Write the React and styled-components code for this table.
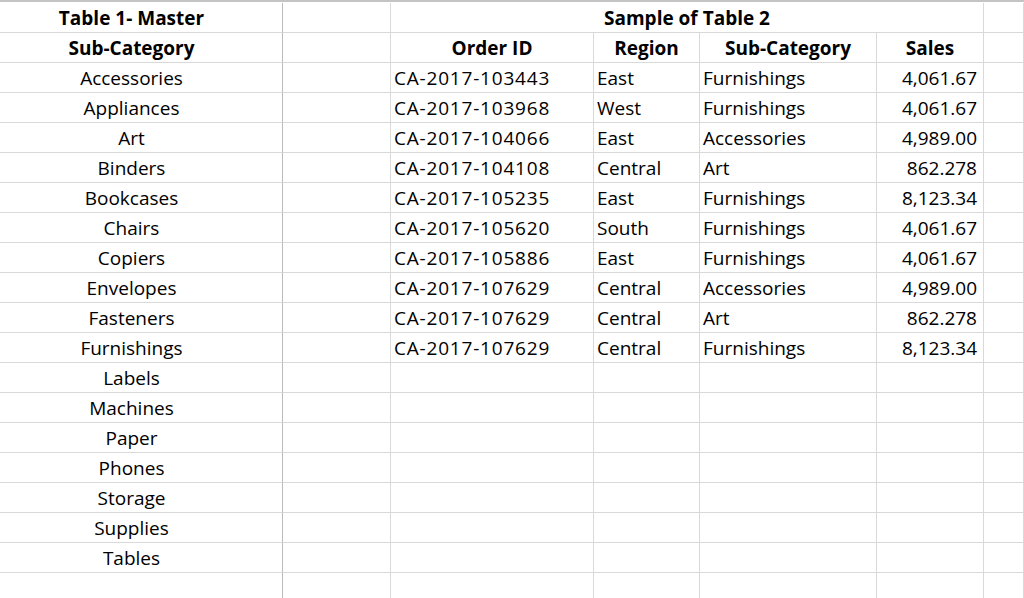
import React from "react";
import styled, { createGlobalStyle } from "styled-components";

const Global = createGlobalStyle`
  html, body { margin: 0; padding: 0; background: #ffffff; }
  body { font-family: "Open Sans", Lato, sans-serif; color: #000; overflow: hidden; }
`;

const Sheet = styled.div`
  width: 1024px;
  height: 598px;
  overflow: hidden;
  border-top: 2px solid #c4c4c4;
  padding-top: 1px;
  box-sizing: border-box;
  display: grid;
  grid-template-columns: 283px 108px 203px 106px 177px 107px 1fr;
  grid-auto-rows: 30px;
  font-size: 19px;
`;

const Cell = styled.div`
  box-sizing: border-box;
  border-right: 1px solid ${(p) => (p.$strong ? "#bcbcbc" : "#d9d9d9")};
  border-bottom: 1px solid #d9d9d9;
  display: flex;
  align-items: center;
  justify-content: ${(p) =>
    p.$align === "center" ? "center" : p.$align === "right" ? "flex-end" : "flex-start"};
  padding: ${(p) => p.$pad || "0 3px"};
  padding-top: 1px;
  font-weight: ${(p) => (p.$bold ? 700 : 400)};
  letter-spacing: ${(p) => (p.$wide ? "0.8px" : "normal")};
  white-space: nowrap;
  overflow: visible;
  grid-column: ${(p) => p.$span || "auto"};
  line-height: 1;
`;

const master = [
  "Accessories", "Appliances", "Art", "Binders", "Bookcases", "Chairs", "Copiers",
  "Envelopes", "Fasteners", "Furnishings", "Labels", "Machines", "Paper", "Phones",
  "Storage", "Supplies", "Tables",
];

const orders = [
  ["CA-2017-103443", "East", "Furnishings", "4,061.67"],
  ["CA-2017-103968", "West", "Furnishings", "4,061.67"],
  ["CA-2017-104066", "East", "Accessories", "4,989.00"],
  ["CA-2017-104108", "Central", "Art", "862.278"],
  ["CA-2017-105235", "East", "Furnishings", "8,123.34"],
  ["CA-2017-105620", "South", "Furnishings", "4,061.67"],
  ["CA-2017-105886", "East", "Furnishings", "4,061.67"],
  ["CA-2017-107629", "Central", "Accessories", "4,989.00"],
  ["CA-2017-107629", "Central", "Art", "862.278"],
  ["CA-2017-107629", "Central", "Furnishings", "8,123.34"],
];

const MasterCell = ({ children, bold }) => (
  <Cell $strong $align="center" $pad="0 19px 0 0" $bold={bold}>
    {children}
  </Cell>
);

export default function App() {
  const rows = [];
  rows.push(
    <React.Fragment key="r0">
      <MasterCell bold>Table 1- Master</MasterCell>
      <Cell />
      <Cell $span="span 4" $align="center" $bold>Sample of Table 2</Cell>
      <Cell />
    </React.Fragment>
  );
  rows.push(
    <React.Fragment key="r1">
      <MasterCell bold>Sub-Category</MasterCell>
      <Cell />
      <Cell $align="center" $bold>Order ID</Cell>
      <Cell $align="center" $bold>Region</Cell>
      <Cell $align="center" $bold>Sub-Category</Cell>
      <Cell $align="center" $bold>Sales</Cell>
      <Cell />
    </React.Fragment>
  );
  for (let i = 0; i < 19; i++) {
    const m = master[i];
    const o = orders[i];
    rows.push(
      <React.Fragment key={"d" + i}>
        <MasterCell>{m || ""}</MasterCell>
        <Cell />
        <Cell $wide>{o ? o[0] : ""}</Cell>
        <Cell>{o ? o[1] : ""}</Cell>
        <Cell>{o ? o[2] : ""}</Cell>
        <Cell $align="right" $pad="0 6px 0 3px">{o ? o[3] : ""}</Cell>
        <Cell />
      </React.Fragment>
    );
  }
  return (
    <>
      <Global />
      <Sheet>{rows}</Sheet>
    </>
  );
}
